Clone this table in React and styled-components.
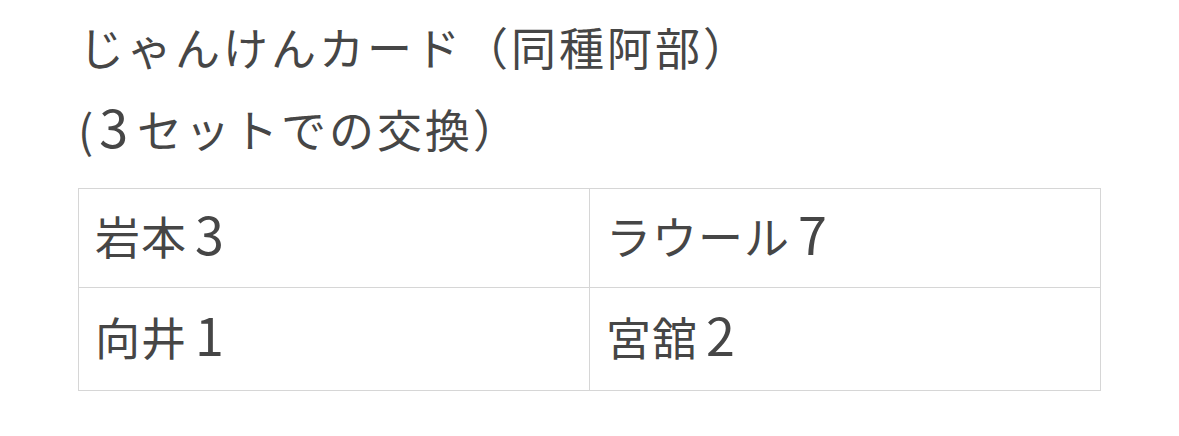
import React from "react";
import styled, { createGlobalStyle } from "styled-components";

const GlobalStyle = createGlobalStyle`
  body {
    margin: 0;
    background: #ffffff;
    font-family: "Noto Sans CJK JP", "Noto Sans", sans-serif;
    color: #464646;
  }
`;

const Page = styled.div`
  padding: 6px 0 0 78px;
  width: 1023px;
`;

const Title = styled.p`
  margin: 0;
  padding-left: ${(p) => p.indent}px;
  font-size: 45px;
  line-height: 82px;
  letter-spacing: 3px;
  white-space: nowrap;
`;

const Num = styled.span`
  font-size: 52px;
  line-height: 0;
  margin: 0 ${(p) => p.right ?? 0}px 0 ${(p) => p.left ?? 0}px;
`;

const Table = styled.table`
  margin-top: 18px;
  width: 1023px;
  border-collapse: collapse;
  table-layout: fixed;
`;

const Cell = styled.td`
  border: 1px solid #d6d6d6;
  height: ${(p) => p.h}px;
  padding: 0 0 4px 16px;
  font-size: 45px;
  line-height: 60px;
  letter-spacing: 1px;
  vertical-align: middle;
  white-space: nowrap;
`;

const rows = [
  { h: 94, cells: [["岩本", "3"], ["ラウール", "7"]] },
  { h: 98, cells: [["向井", "1"], ["宮舘", "2"]] },
];

export default function App() {
  return (
    <>
      <GlobalStyle />
      <Page>
        <Title indent={1}>じゃんけんカード（同種阿部）</Title>
        <Title indent={-4}>
          (<Num left={3} right={6}>3</Num>セットでの交換）
        </Title>
        <Table>
          <tbody>
            {rows.map((r, i) => (
              <tr key={i}>
                {r.cells.map(([name, n]) => (
                  <Cell key={name} h={r.h}>
                    {name}
                    <Num left={8}>{n}</Num>
                  </Cell>
                ))}
              </tr>
            ))}
          </tbody>
        </Table>
      </Page>
    </>
  );
}
